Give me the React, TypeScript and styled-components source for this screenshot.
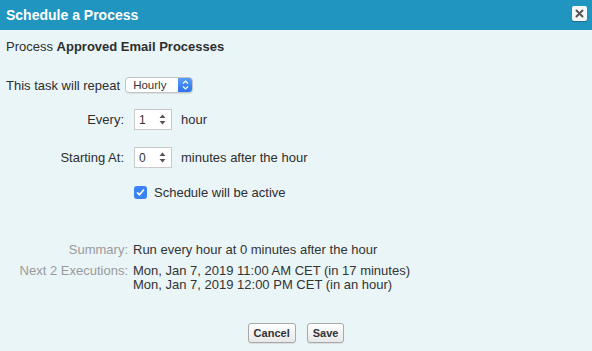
import React from 'react';
import styled, { createGlobalStyle } from 'styled-components';

const GlobalStyle = createGlobalStyle`
  html, body {
    margin: 0;
    padding: 0;
    background: #eaf5f8;
  }
  body {
    font-family: "Liberation Sans", Arial, Helvetica, sans-serif;
    font-size: 13px;
    color: #2e2e2e;
  }
`;

const Dialog = styled.div`
  min-height: 100vh;
  background: #eaf5f8;
  display: flex;
  flex-direction: column;
`;

const Header = styled.div`
  height: 30px;
  background: #1f95bf;
  display: flex;
  align-items: center;
  justify-content: space-between;
  padding: 0 5px 0 6px;
`;

const Title = styled.h2`
  margin: 0;
  font-size: 14px;
  font-weight: bold;
  color: #ffffff;
  line-height: 16px;
`;

const CloseButton = styled.button`
  width: 15px;
  height: 15px;
  margin-bottom: 3px;
  padding: 0;
  border: none;
  border-radius: 2px;
  background: #f5f7f8;
  box-shadow: 0 1px 1px rgba(0, 0, 0, 0.25);
  display: flex;
  align-items: center;
  justify-content: center;
`;

const Body = styled.div`
  padding: 0 6px;
`;

const ProcessLine = styled.div`
  margin-top: 9px;
  line-height: 16px;
`;

const RepeatRow = styled.div`
  margin-top: 20px;
  height: 20px;
  display: flex;
  align-items: center;
  gap: 5px;
`;

const Select = styled.div`
  width: 68px;
  height: 16px;
  box-sizing: border-box;
  border: 1px solid #c4c4c4;
  border-radius: 4px;
  background: #ffffff;
  display: flex;
  overflow: hidden;
  box-shadow: 0 1px 1px rgba(0, 0, 0, 0.08);
`;

const SelectText = styled.span`
  flex: 1;
  font-size: 11.5px;
  line-height: 14px;
  padding-left: 7px;
  color: #333;
`;

const SelectArrows = styled.span`
  width: 14px;
  background: linear-gradient(#5a9cf8, #2c72ea);
  display: flex;
  align-items: center;
  justify-content: center;
`;

const FieldGrid = styled.div`
  margin-top: 14px;
  display: grid;
  grid-template-columns: 118px auto;
  column-gap: 10px;
  row-gap: 17px;
  align-items: center;
`;

const FieldLabel = styled.div`
  text-align: right;
`;

const FieldControl = styled.div`
  display: flex;
  align-items: center;
  gap: 9px;
`;

const NumberBox = styled.div`
  width: 38px;
  height: 21px;
  box-sizing: border-box;
  border: 1px solid #c9c9c9;
  background: #ffffff;
  display: flex;
  align-items: center;
  justify-content: space-between;
  padding: 0 5px 0 4px;
  font-size: 12px;
  color: #333;
`;

const CheckRow = styled.div`
  margin-top: 14px;
  height: 20px;
  display: flex;
  align-items: center;
  gap: 7px;
  padding-left: 128px;
`;

const CheckBox = styled.span`
  width: 13px;
  height: 13px;
  border-radius: 3px;
  background: #3b82f2;
  display: flex;
  align-items: center;
  justify-content: center;
`;

const SummaryGrid = styled.div`
  margin-top: 41px;
  display: grid;
  grid-template-columns: 122px auto;
  column-gap: 5px;
  row-gap: 7px;
  line-height: 14px;
`;

const SummaryLabel = styled.div<{ $muted?: boolean }>`
  text-align: right;
  color: #9a9a9a;
`;

const SummaryValue = styled.div`
  color: #333;
`;

const Footer = styled.div`
  margin-top: 31px;
  display: flex;
  justify-content: center;
  gap: 11px;
`;

const Button = styled.button`
  height: 20px;
  padding: 0 5px;
  border: 1px solid #a9a9a9;
  border-radius: 3px;
  background: linear-gradient(#fefefe, #e8e8e8);
  font-family: "Liberation Sans", Arial, sans-serif;
  font-size: 11px;
  font-weight: bold;
  color: #333;
  box-shadow: 0 1px 0 rgba(0, 0, 0, 0.08);
`;

const Spinner = () => (
  <svg width="7" height="11" viewBox="0 0 7 11">
    <path d="M3.5 0.5 L6.5 4 L0.5 4 Z" fill="#555" />
    <path d="M3.5 10.5 L6.5 7 L0.5 7 Z" fill="#555" />
  </svg>
);

const App: React.FC = () => {
  return (
    <Dialog>
      <GlobalStyle />
      <Header>
        <Title>Schedule a Process</Title>
        <CloseButton aria-label="Close">
          <svg width="9" height="9" viewBox="0 0 9 9">
            <path d="M1.5 1.5 L7.5 7.5 M7.5 1.5 L1.5 7.5" stroke="#555" strokeWidth="2" strokeLinecap="round" />
          </svg>
        </CloseButton>
      </Header>
      <Body>
        <ProcessLine>
          Process <b>Approved Email Processes</b>
        </ProcessLine>
        <RepeatRow>
          <span>This task will repeat</span>
          <Select>
            <SelectText>Hourly</SelectText>
            <SelectArrows>
              <svg width="7" height="10" viewBox="0 0 7 10">
                <path d="M1 3.5 L3.5 1 L6 3.5 M1 6.5 L3.5 9 L6 6.5" stroke="#fff" strokeWidth="1.2" fill="none" />
              </svg>
            </SelectArrows>
          </Select>
        </RepeatRow>
        <FieldGrid>
          <FieldLabel>Every:</FieldLabel>
          <FieldControl>
            <NumberBox>
              <span>1</span>
              <Spinner />
            </NumberBox>
            <span>hour</span>
          </FieldControl>
          <FieldLabel>Starting At:</FieldLabel>
          <FieldControl>
            <NumberBox>
              <span>0</span>
              <Spinner />
            </NumberBox>
            <span>minutes after the hour</span>
          </FieldControl>
        </FieldGrid>
        <CheckRow>
          <CheckBox>
            <svg width="9" height="9" viewBox="0 0 9 9">
              <path d="M1.5 4.8 L3.6 6.8 L7.5 2" stroke="#fff" strokeWidth="1.6" fill="none" strokeLinecap="round" strokeLinejoin="round" />
            </svg>
          </CheckBox>
          <span>Schedule will be active</span>
        </CheckRow>
        <SummaryGrid>
          <SummaryLabel>Summary:</SummaryLabel>
          <SummaryValue>Run every hour at 0 minutes after the hour</SummaryValue>
          <SummaryLabel>Next 2 Executions:</SummaryLabel>
          <SummaryValue>
            Mon, Jan 7, 2019 11:00 AM CET (in 17 minutes)
            <br />
            Mon, Jan 7, 2019 12:00 PM CET (in an hour)
          </SummaryValue>
        </SummaryGrid>
        <Footer>
          <Button>Cancel</Button>
          <Button>Save</Button>
        </Footer>
      </Body>
    </Dialog>
  );
};

export default App;
